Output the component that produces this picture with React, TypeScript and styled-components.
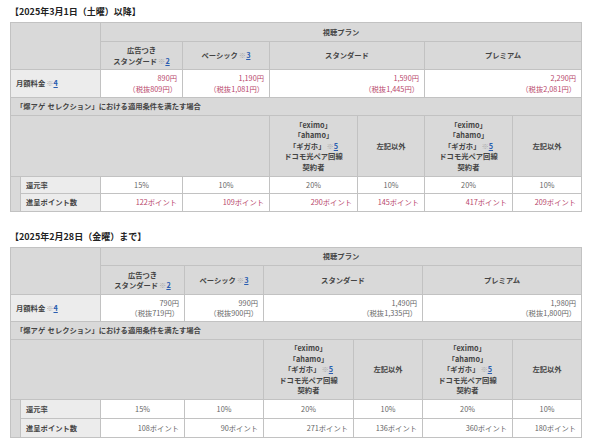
import React from 'react';
import styled, { createGlobalStyle } from 'styled-components';

type Price = { incl: string; excl: string };
type PlanTable = {
  title: string;
  cols: number[];
  heights: number[];
  accent: boolean;
  prices: Price[];
  rates: string[];
  points: string[];
};

const tables: PlanTable[] = [
  {
    title: '【2025年3月1日（土曜）以降】',
    cols: [10, 80, 82, 87, 88, 67, 88, 69],
    heights: [19, 28, 28, 18, 61, 17, 18],
    accent: true,
    prices: [
      { incl: '890円', excl: '（税抜809円）' },
      { incl: '1,190円', excl: '（税抜1,081円）' },
      { incl: '1,590円', excl: '（税抜1,445円）' },
      { incl: '2,290円', excl: '（税抜2,081円）' },
    ],
    rates: ['15%', '10%', '20%', '10%', '20%', '10%'],
    points: ['122ポイント', '109ポイント', '290ポイント', '145ポイント', '417ポイント', '209ポイント'],
  },
  {
    title: '【2025年2月28日（金曜）まで】',
    cols: [10, 80, 84, 79, 90, 69, 90, 69],
    heights: [18, 29, 27, 18, 60, 19, 19],
    accent: false,
    prices: [
      { incl: '790円', excl: '（税抜719円）' },
      { incl: '990円', excl: '（税抜900円）' },
      { incl: '1,490円', excl: '（税抜1,335円）' },
      { incl: '1,980円', excl: '（税抜1,800円）' },
    ],
    rates: ['15%', '10%', '20%', '10%', '20%', '10%'],
    points: ['108ポイント', '90ポイント', '271ポイント', '136ポイント', '360ポイント', '180ポイント'],
  },
];

const Note = ({ n }: { n: number }) => (
  <>
    <Mark>※</Mark>
    <NoteLink>{n}</NoteLink>
  </>
);

const Eligible = () => (
  <>
    「eximo」
    <br />
    「ahamo」
    <br />
    「ギガホ」
    <Note n={5} />
    <br />
    ドコモ光ペア回線
    <br />
    契約者
  </>
);

const PriceTable = ({ data }: { data: PlanTable }) => {
  const h = data.heights;
  const tone = data.accent ? 'red' : 'gray';
  return (
    <>
      <Heading>{data.title}</Heading>
      <Table>
        <colgroup>
          {data.cols.map((w, i) => (
            <col key={i} style={{ width: w }} />
          ))}
        </colgroup>
        <tbody>
          <Row $h={h[0]}>
            <Head colSpan={2} rowSpan={2} />
            <Head colSpan={6}>視聴プラン</Head>
          </Row>
          <Row $h={h[1]}>
            <Head>
              広告つき
              <br />
              スタンダード
              <Note n={2} />
            </Head>
            <Head>
              ベーシック
              <Note n={3} />
            </Head>
            <Head colSpan={2}>スタンダード</Head>
            <Head colSpan={2}>プレミアム</Head>
          </Row>
          <Row $h={h[2]}>
            <Label colSpan={2}>
              月額料金
              <Note n={4} />
            </Label>
            {data.prices.map((p, i) => (
              <Value key={i} colSpan={i > 1 ? 2 : 1} $align="right" $tone={tone}>
                {p.incl}
                <br />
                {p.excl}
              </Value>
            ))}
          </Row>
          <Row $h={h[3]}>
            <Head colSpan={8} $align="left">
              {'「爆アゲ\u2004セレクション」における適用条件を満たす場合'}
            </Head>
          </Row>
          <Row $h={h[4]}>
            <Head colSpan={4} />
            <Head>
              <Eligible />
            </Head>
            <Head>左記以外</Head>
            <Head>
              <Eligible />
            </Head>
            <Head>左記以外</Head>
          </Row>
          <Row $h={h[5]}>
            <Head rowSpan={2} />
            <Label>還元率</Label>
            {data.rates.map((r, i) => (
              <Value key={i} $align="center" $tone="gray">
                {r}
              </Value>
            ))}
          </Row>
          <Row $h={h[6]}>
            <Label>進呈ポイント数</Label>
            {data.points.map((p, i) => (
              <Value key={i} $align="right" $tone={tone}>
                {p}
              </Value>
            ))}
          </Row>
        </tbody>
      </Table>
    </>
  );
};

export default function App() {
  return (
    <>
      <GlobalStyle />
      <Page>
        {tables.map((t) => (
          <PriceTable key={t.title} data={t} />
        ))}
      </Page>
    </>
  );
}

const GlobalStyle = createGlobalStyle`
  body {
    margin: 0;
    background: #fff;
    font-family: "Noto Sans CJK JP", "Noto Sans", sans-serif;
    color: #333;
  }
`;

const Page = styled.div`
  padding: 5px 9px 0 10px;
`;

const Heading = styled.div`
  font-size: 9px;
  font-weight: 700;
  line-height: 13px;
  color: #222;
  margin-bottom: 4px;
`;

const Table = styled.table`
  border-collapse: collapse;
  table-layout: fixed;
  width: 571px;
  margin-bottom: 18px;
  font-size: 7.3px;
  line-height: 10.4px;
`;

const Row = styled.tr<{ $h: number }>`
  height: ${(p) => p.$h}px;
`;

const Cell = styled.td<{ $align?: 'left' | 'center' | 'right' }>`
  border: 1px solid #c2c2c2;
  padding: 0 5px;
  vertical-align: middle;
  text-align: ${(p) => p.$align ?? 'center'};
  white-space: nowrap;
`;

const Head = styled(Cell)`
  background: #d9d9d9;
  font-weight: 700;
  color: #444;
`;

const Label = styled(Cell)`
  background: #ececec;
  font-weight: 700;
  color: #444;
  text-align: left;
`;

const Value = styled(Cell)<{ $tone: 'red' | 'gray' }>`
  background: #fff;
  color: ${(p) => (p.$tone === 'red' ? '#b8466a' : '#666')};
`;

const Mark = styled.span`
  color: #aaa;
  font-weight: 400;
  margin-left: 1px;
`;

const NoteLink = styled.span`
  color: #2a5db0;
  text-decoration: underline;
  font-weight: 700;
`;
